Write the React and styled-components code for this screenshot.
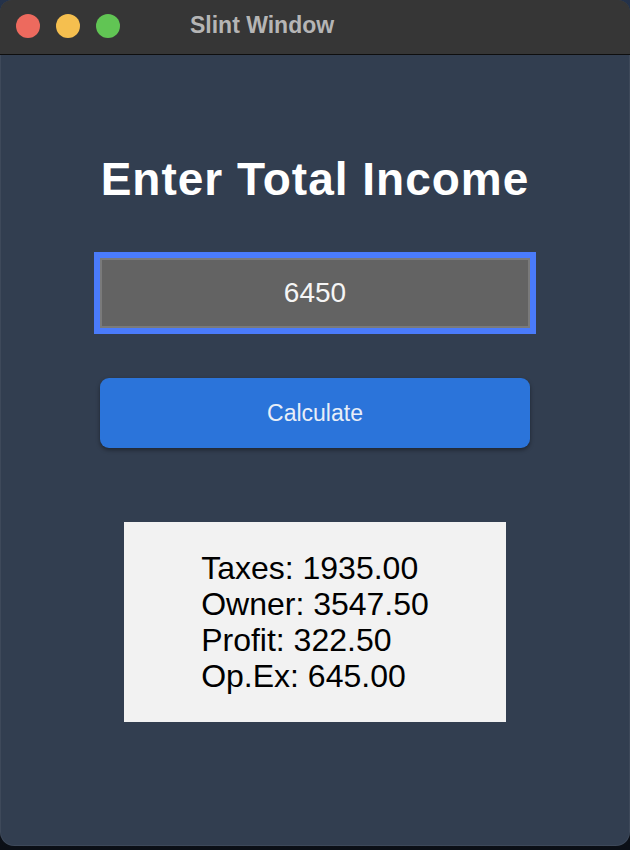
import React from "react";
import styled, { createGlobalStyle } from "styled-components";

const Global = createGlobalStyle`
  html, body {
    margin: 0;
    padding: 0;
    background: #121822;
    overflow: hidden;
  }
  * { box-sizing: border-box; }
`;

const Desktop = styled.div`
  width: 630px;
  height: 850px;
  background: linear-gradient(180deg, #24324a 0%, #0b0f16 100%);
`;

const Window = styled.div`
  width: 630px;
  height: 846px;
  border-radius: 12px 12px 14px 14px;
  overflow: hidden;
  background: #323e50;
  display: flex;
  flex-direction: column;
  box-shadow: inset 0 0 0 1px rgba(255, 255, 255, 0.06);
`;

const TitleBar = styled.div`
  height: 55px;
  flex: none;
  background: #363636;
  border-bottom: 1px solid #0e0e0e;
  display: flex;
  align-items: center;
  padding-left: 16px;
  padding-bottom: 3px;
`;

const Lights = styled.div`
  display: flex;
  gap: 16px;
`;

const Light = styled.span`
  width: 24px;
  height: 24px;
  border-radius: 50%;
  background: ${(p) => p.$color};
`;

const WindowTitle = styled.div`
  margin-left: 70px;
  font-family: "Liberation Sans", Arial, sans-serif;
  font-weight: 700;
  font-size: 23px;
  color: #b5b5b5;
  line-height: 1;
`;

const Content = styled.main`
  flex: 1;
  display: flex;
  flex-direction: column;
  align-items: center;
  padding-top: 101px;
  font-family: "Liberation Sans", Arial, sans-serif;
`;

const Heading = styled.h1`
  margin: 0 0 56px;
  font-size: 46px;
  line-height: 46px;
  font-weight: 700;
  letter-spacing: 1px;
  color: #ffffff;
`;

const IncomeInput = styled.input`
  width: 430px;
  height: 70px;
  background: #636363;
  border: 2px solid #7a7a7a;
  outline: 6px solid #4a7bfb;
  color: #f5f5f5;
  font-family: "Liberation Sans", Arial, sans-serif;
  font-size: 28px;
  text-align: center;
  padding: 0;
`;

const CalcButton = styled.button`
  margin-top: 50px;
  width: 430px;
  height: 70px;
  border: none;
  border-radius: 9px;
  background: #2b74da;
  color: #e8eef8;
  font-family: "Liberation Sans", Arial, sans-serif;
  font-size: 23px;
  box-shadow: 0 2px 4px rgba(0, 0, 0, 0.4);
  cursor: pointer;
`;

const ResultBox = styled.section`
  margin-top: 74px;
  width: 382px;
  height: 200px;
  background: #f2f2f2;
  display: flex;
  align-items: center;
  justify-content: center;
`;

const ResultList = styled.div`
  display: flex;
  flex-direction: column;
  font-size: 32px;
  line-height: 36px;
  color: #000;
`;

const Line = styled.div``;

export default function App() {
  return (
    <>
      <Global />
      <Desktop>
        <Window>
          <TitleBar>
            <Lights>
              <Light $color="#ed6a5e" />
              <Light $color="#f5bf4f" />
              <Light $color="#61c554" />
            </Lights>
            <WindowTitle>Slint Window</WindowTitle>
          </TitleBar>
          <Content>
            <Heading>Enter Total Income</Heading>
            <IncomeInput defaultValue="6450" />
            <CalcButton>Calculate</CalcButton>
            <ResultBox>
              <ResultList>
                <Line>Taxes: 1935.00</Line>
                <Line>Owner: 3547.50</Line>
                <Line>Profit: 322.50</Line>
                <Line>Op.Ex: 645.00</Line>
              </ResultList>
            </ResultBox>
          </Content>
        </Window>
      </Desktop>
    </>
  );
}
